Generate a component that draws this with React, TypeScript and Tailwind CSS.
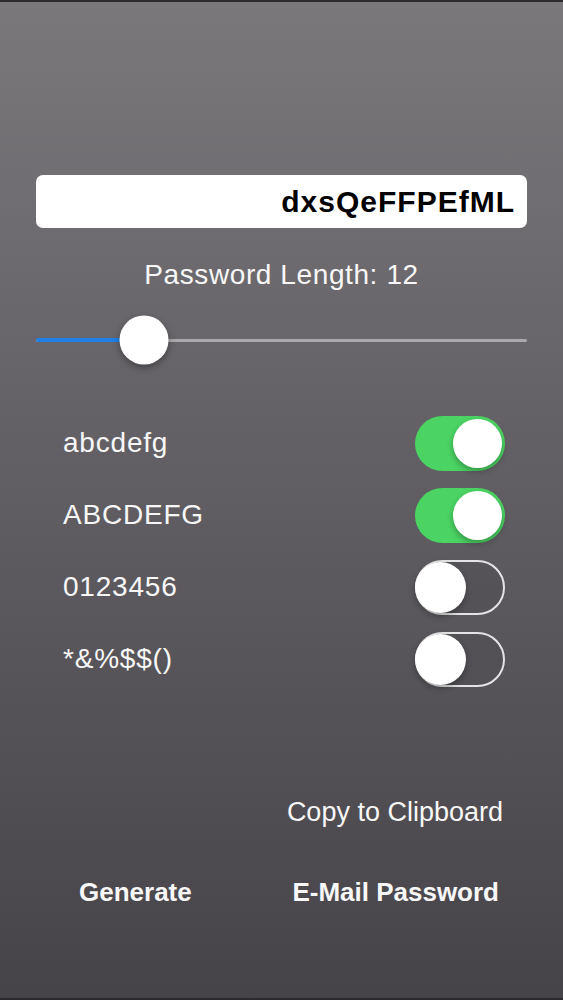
import React from "react";

const OPTIONS = [
  { label: "abcdefg", on: true },
  { label: "ABCDEFG", on: true },
  { label: "0123456", on: false },
  { label: "*&%$$()", on: false },
];

function Toggle({ on }: { on: boolean }) {
  if (on) {
    return (
      <div className="flex h-[55px] w-[90px] items-center justify-end rounded-full bg-[#4bd463] p-[3px]">
        <div className="h-[49px] w-[49px] rounded-full bg-white shadow-[0_3px_6px_rgba(0,0,0,0.3)]" />
      </div>
    );
  }
  return (
    <div className="flex h-[55px] w-[90px] items-center justify-start rounded-full border-2 border-[#e4e4e6] bg-[#4e4c50]/40">
      <div className="h-[51px] w-[51px] -ml-[2px] rounded-full bg-white shadow-[0_3px_6px_rgba(0,0,0,0.3)]" />
    </div>
  );
}

export default function App() {
  const length = 12;
  const pct = 22;

  return (
    <div
      className="flex min-h-[1000px] w-full flex-col border-t-2 border-b-2 border-t-[#2b2a2e] border-b-[#2b2a2e] bg-gradient-to-b from-[#7a787b] to-[#464449] text-[#f7f7f7]"
      style={{ fontFamily: '"Liberation Sans", Arial, sans-serif' }}
    >
      <div className="mx-[36px] mt-[173px] flex h-[53px] items-center justify-end rounded-[7px] bg-white pr-[12px]">
        <span className="text-[30px] font-bold tracking-[1px] text-black">dxsQeFFPEfML</span>
      </div>

      <p className="mt-[30px] text-center text-[28px] leading-[34px] tracking-[0.6px]">Password Length: {length}</p>

      <div className="mx-[36px] mt-[23px] flex h-[50px] items-center">
        <div className="relative h-[3px] w-full rounded-full bg-[#a9a8ab]">
          <div className="absolute left-0 -top-[0.5px] h-[4px] rounded-full bg-[#1f80e8]" style={{ width: `${pct}%` }} />
          <div
            className="absolute top-1/2 h-[49px] w-[49px] -translate-x-1/2 -translate-y-1/2 rounded-full bg-white shadow-[0_3px_7px_rgba(0,0,0,0.35)]"
            style={{ left: `${pct}%` }}
          />
        </div>
      </div>

      <div className="mt-[42px] flex flex-col pl-[63px] pr-[58px]">
        {OPTIONS.map((o) => (
          <div key={o.label} className="flex h-[72px] items-center justify-between">
            <span className="text-[28px] tracking-[0.8px]">{o.label}</span>
            <Toggle on={o.on} />
          </div>
        ))}
      </div>

      <div className="mt-[100px] flex justify-end pr-[60px]">
        <span className="text-[27px] leading-[34px]">Copy to Clipboard</span>
      </div>

      <div className="mt-[46px] flex items-center justify-between pl-[79px] pr-[64px]">
        <span className="text-[26px] font-bold leading-[34px]">Generate</span>
        <span className="text-[26px] font-bold leading-[34px]">E-Mail Password</span>
      </div>
    </div>
  );
}
